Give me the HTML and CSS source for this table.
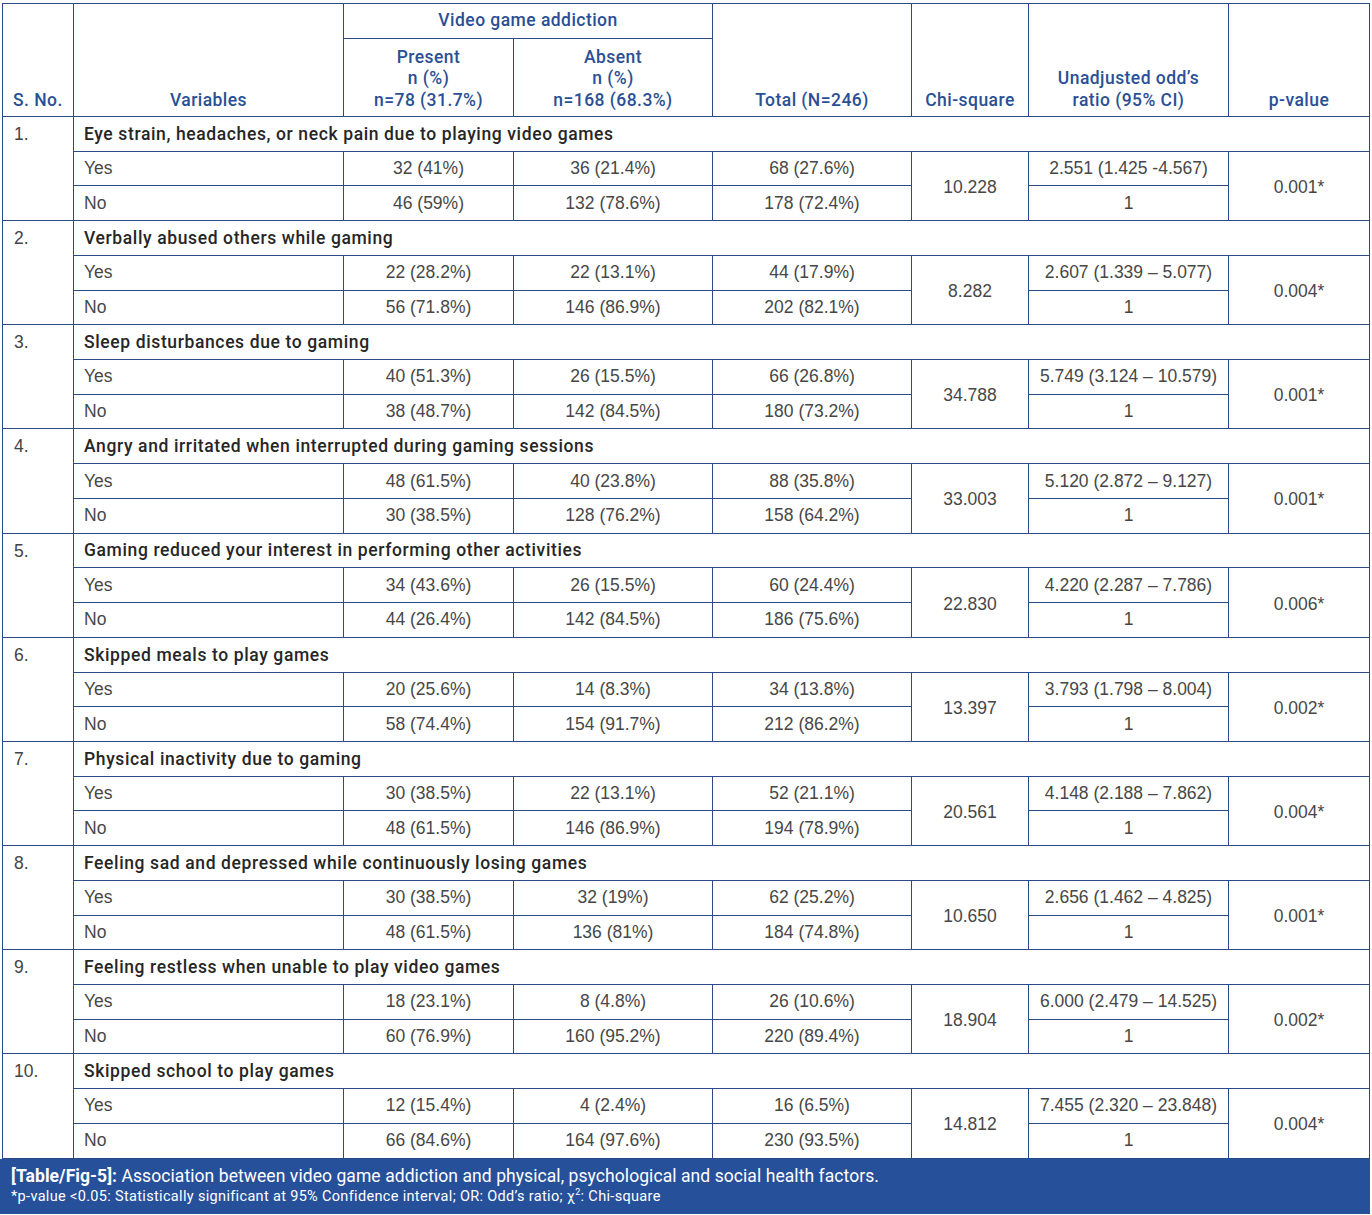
FILE: index.html
```html
<!DOCTYPE html>
<html>
<head>
<meta charset="utf-8">
<link rel="stylesheet" href="styles.css">
</head>
<body>
<div class="wrap">
<table class="t">
<colgroup>
<col class="c1"><col class="c2"><col class="c3"><col class="c4"><col class="c5"><col class="c6"><col class="c7"><col class="c8">
</colgroup>
<thead>
<tr class="h1">
<th rowspan="2" class="hb left">S. No.</th>
<th rowspan="2" class="hb">Variables</th>
<th colspan="2" class="hm">Video game addiction</th>
<th rowspan="2" class="hb">Total (N=246)</th>
<th rowspan="2" class="hb">Chi-square</th>
<th rowspan="2" class="hb">Unadjusted odd’s<br>ratio (95% CI)</th>
<th rowspan="2" class="hb">p-value</th>
</tr>
<tr class="h2">
<th class="hb">Present<br>n (%)<br>n=78 (31.7%)</th>
<th class="hb">Absent<br>n (%)<br>n=168 (68.3%)</th>
</tr>
</thead>
<tbody>
<tr class="ti"><td rowspan="3" class="sn">1.</td><td colspan="7" class="title">Eye strain, headaches, or neck pain due to playing video games</td></tr>
<tr><td class="v">Yes</td><td class="n">32 (41%)</td><td class="n">36 (21.4%)</td><td class="n">68 (27.6%)</td><td rowspan="2" class="n m">10.228</td><td class="n">2.551 (1.425 -4.567)</td><td rowspan="2" class="n m">0.001*</td></tr>
<tr><td class="v">No</td><td class="n">46 (59%)</td><td class="n">132 (78.6%)</td><td class="n">178 (72.4%)</td><td class="n">1</td></tr>

<tr class="ti"><td rowspan="3" class="sn">2.</td><td colspan="7" class="title">Verbally abused others while gaming</td></tr>
<tr><td class="v">Yes</td><td class="n">22 (28.2%)</td><td class="n">22 (13.1%)</td><td class="n">44 (17.9%)</td><td rowspan="2" class="n m">8.282</td><td class="n">2.607 (1.339 – 5.077)</td><td rowspan="2" class="n m">0.004*</td></tr>
<tr><td class="v">No</td><td class="n">56 (71.8%)</td><td class="n">146 (86.9%)</td><td class="n">202 (82.1%)</td><td class="n">1</td></tr>

<tr class="ti"><td rowspan="3" class="sn">3.</td><td colspan="7" class="title">Sleep disturbances due to gaming</td></tr>
<tr><td class="v">Yes</td><td class="n">40 (51.3%)</td><td class="n">26 (15.5%)</td><td class="n">66 (26.8%)</td><td rowspan="2" class="n m">34.788</td><td class="n">5.749 (3.124 – 10.579)</td><td rowspan="2" class="n m">0.001*</td></tr>
<tr><td class="v">No</td><td class="n">38 (48.7%)</td><td class="n">142 (84.5%)</td><td class="n">180 (73.2%)</td><td class="n">1</td></tr>

<tr class="ti"><td rowspan="3" class="sn">4.</td><td colspan="7" class="title">Angry and irritated when interrupted during gaming sessions</td></tr>
<tr><td class="v">Yes</td><td class="n">48 (61.5%)</td><td class="n">40 (23.8%)</td><td class="n">88 (35.8%)</td><td rowspan="2" class="n m">33.003</td><td class="n">5.120 (2.872 – 9.127)</td><td rowspan="2" class="n m">0.001*</td></tr>
<tr><td class="v">No</td><td class="n">30 (38.5%)</td><td class="n">128 (76.2%)</td><td class="n">158 (64.2%)</td><td class="n">1</td></tr>

<tr class="ti"><td rowspan="3" class="sn">5.</td><td colspan="7" class="title">Gaming reduced your interest in performing other activities</td></tr>
<tr><td class="v">Yes</td><td class="n">34 (43.6%)</td><td class="n">26 (15.5%)</td><td class="n">60 (24.4%)</td><td rowspan="2" class="n m">22.830</td><td class="n">4.220 (2.287 – 7.786)</td><td rowspan="2" class="n m">0.006*</td></tr>
<tr><td class="v">No</td><td class="n">44 (26.4%)</td><td class="n">142 (84.5%)</td><td class="n">186 (75.6%)</td><td class="n">1</td></tr>

<tr class="ti"><td rowspan="3" class="sn">6.</td><td colspan="7" class="title">Skipped meals to play games</td></tr>
<tr><td class="v">Yes</td><td class="n">20 (25.6%)</td><td class="n">14 (8.3%)</td><td class="n">34 (13.8%)</td><td rowspan="2" class="n m">13.397</td><td class="n">3.793 (1.798 – 8.004)</td><td rowspan="2" class="n m">0.002*</td></tr>
<tr><td class="v">No</td><td class="n">58 (74.4%)</td><td class="n">154 (91.7%)</td><td class="n">212 (86.2%)</td><td class="n">1</td></tr>

<tr class="ti"><td rowspan="3" class="sn">7.</td><td colspan="7" class="title">Physical inactivity due to gaming</td></tr>
<tr><td class="v">Yes</td><td class="n">30 (38.5%)</td><td class="n">22 (13.1%)</td><td class="n">52 (21.1%)</td><td rowspan="2" class="n m">20.561</td><td class="n">4.148 (2.188 – 7.862)</td><td rowspan="2" class="n m">0.004*</td></tr>
<tr><td class="v">No</td><td class="n">48 (61.5%)</td><td class="n">146 (86.9%)</td><td class="n">194 (78.9%)</td><td class="n">1</td></tr>

<tr class="ti"><td rowspan="3" class="sn">8.</td><td colspan="7" class="title">Feeling sad and depressed while continuously losing games</td></tr>
<tr><td class="v">Yes</td><td class="n">30 (38.5%)</td><td class="n">32 (19%)</td><td class="n">62 (25.2%)</td><td rowspan="2" class="n m">10.650</td><td class="n">2.656 (1.462 – 4.825)</td><td rowspan="2" class="n m">0.001*</td></tr>
<tr><td class="v">No</td><td class="n">48 (61.5%)</td><td class="n">136 (81%)</td><td class="n">184 (74.8%)</td><td class="n">1</td></tr>

<tr class="ti"><td rowspan="3" class="sn">9.</td><td colspan="7" class="title">Feeling restless when unable to play video games</td></tr>
<tr><td class="v">Yes</td><td class="n">18 (23.1%)</td><td class="n">8 (4.8%)</td><td class="n">26 (10.6%)</td><td rowspan="2" class="n m">18.904</td><td class="n">6.000 (2.479 – 14.525)</td><td rowspan="2" class="n m">0.002*</td></tr>
<tr><td class="v">No</td><td class="n">60 (76.9%)</td><td class="n">160 (95.2%)</td><td class="n">220 (89.4%)</td><td class="n">1</td></tr>

<tr class="ti"><td rowspan="3" class="sn">10.</td><td colspan="7" class="title">Skipped school to play games</td></tr>
<tr><td class="v">Yes</td><td class="n">12 (15.4%)</td><td class="n">4 (2.4%)</td><td class="n">16 (6.5%)</td><td rowspan="2" class="n m">14.812</td><td class="n">7.455 (2.320 – 23.848)</td><td rowspan="2" class="n m">0.004*</td></tr>
<tr><td class="v">No</td><td class="n">66 (84.6%)</td><td class="n">164 (97.6%)</td><td class="n">230 (93.5%)</td><td class="n">1</td></tr>
</tbody>
</table>
<div class="foot">
<p class="cap"><b>[Table/Fig-5]:</b> Association between video game addiction and physical, psychological and social health factors.</p>
<p class="note">*p-value &lt;0.05: Statistically significant at 95% Confidence interval; OR: Odd’s ratio; χ<sup>2</sup>: Chi-square</p>
</div>
</div>
</body>
</html>
```
FILE: styles.css
```css
body {
  margin: 0;
  background: #ffffff;
  font-family: "Liberation Sans", Arial, sans-serif;
}

.wrap {
  width: 1370px;
  padding-top: 3px;
}

.t {
  margin-left: 2px;
  width: 1367px;
  border-collapse: collapse;
  table-layout: fixed;
}

.c1 { width: 71px; }
.c2 { width: 270px; }
.c3 { width: 170px; }
.c4 { width: 199px; }
.c5 { width: 199px; }
.c6 { width: 117px; }
.c7 { width: 200px; }
.c8 { width: 141px; }

.t th,
.t td {
  border: 1px solid #2c4a88;
  padding: 0;
}

.t th {
  font-family: Roboto, "Liberation Sans", sans-serif;
  font-weight: 500;
  font-size: 17.5px;
  line-height: 21.5px;
  letter-spacing: 0.45px;
  color: #2b4f95;
  text-align: center;
}

.h1 { height: 35px; }
.h2 { height: 78px; }

.t th.hb {
  vertical-align: bottom;
  padding-bottom: 5px;
}

.t th.hm {
  vertical-align: middle;
}

.t th.left {
  text-align: left;
  padding-left: 10px;
}

.t tbody tr { height: 34.73px; }

.t td.sn {
  vertical-align: top;
  padding: 7px 0 0 11px;
  font-family: "Liberation Sans", Arial, sans-serif;
  font-size: 17.5px;
  line-height: 21px;
  color: #444444;
}

.t td.title {
  padding-left: 10px;
  font-family: Roboto, "Liberation Sans", sans-serif;
  font-weight: 500;
  font-size: 17.5px;
  letter-spacing: 0.62px;
  color: #262626;
}

.t td.v,
.t td.n {
  font-family: "Liberation Sans", Arial, sans-serif;
  font-size: 17.5px;
  color: #474747;
}

.t td.m {
  padding-top: 3px;
}

.t td.v {
  padding-left: 10px;
}

.t td.n {
  text-align: center;
}

.foot {
  background: #27509b;
  color: #ffffff;
  height: 55px;
  box-sizing: border-box;
  padding: 7px 0 0 11px;
  font-family: Roboto, "Liberation Sans", sans-serif;
}

.cap {
  margin: 0;
  font-size: 17.5px;
  line-height: 21px;
  font-weight: 400;
  letter-spacing: 0.07px;
}

.cap b {
  font-weight: 700;
}

.note {
  margin: 0;
  font-size: 14.5px;
  line-height: 20px;
  font-weight: 400;
  letter-spacing: 0.33px;
}

.note sup {
  font-size: 9px;
  line-height: 0;
}
```
